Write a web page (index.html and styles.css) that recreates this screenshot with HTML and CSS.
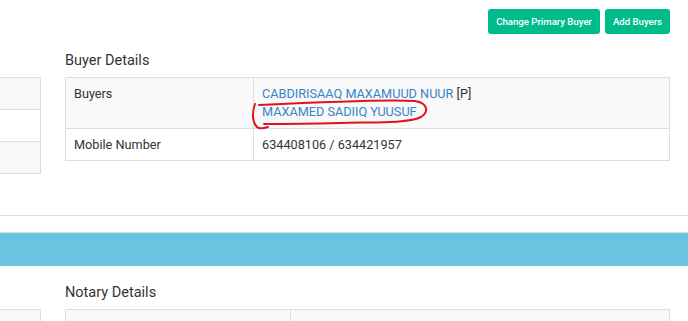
FILE: index.html
```html
<!DOCTYPE html>
<html lang="en">
<head>
  <meta charset="UTF-8" />
  <title>Property Details</title>
  <link rel="stylesheet" href="styles.css">
</head>
<body>
  <div class="page">
    <div class="toolbar">
      <button class="btn">Change Primary Buyer</button>
      <button class="btn">Add Buyers</button>
    </div>

    <section class="split">
      <div class="side">
        <table class="side-table">
          <tr><td></td></tr>
          <tr><td></td></tr>
          <tr><td></td></tr>
        </table>
      </div>
      <div class="main">
        <h4 class="block-title">Buyer Details</h4>
        <table class="detail">
          <tr>
            <th class="buyer-label">Buyers</th>
            <td>
              <div class="name"><a href="#">CABDIRISAAQ MAXAMUUD NUUR</a> [P]</div>
              <div class="name"><a href="#">MAXAMED SADIIQ YUUSUF</a></div>
            </td>
          </tr>
          <tr>
            <th class="buyer-label">Mobile Number</th>
            <td>634408106 / 634421957</td>
          </tr>
        </table>
      </div>
    </section>

    <hr class="divider">
    <div class="band"></div>

    <section class="split">
      <div class="side">
        <table class="side-table">
          <tr><td></td></tr>
          <tr><td></td></tr>
        </table>
      </div>
      <div class="main">
        <h4 class="block-title">Notary Details</h4>
        <table class="detail">
          <tr>
            <th class="notary-label">&nbsp;</th>
            <td>&nbsp;</td>
          </tr>
          <tr>
            <th class="notary-label">&nbsp;</th>
            <td>&nbsp;</td>
          </tr>
        </table>
      </div>
    </section>

    <!-- hand-drawn annotation on the screenshot -->
    <svg class="scribble" width="688" height="321" viewBox="0 0 688 321">
      <path d="M259,105 C300,103 390,99 415,101 C428,103 429,112 421,117 C410,123 380,122 340,123 C300,124 278,124 264,124 M255,104 C252,112 252,122 257,127 C259,129 265,128 268,127" />
    </svg>
  </div>
</body>
</html>
```

FILE: styles.css
```css
body {
  margin: 0;
  font-family: Roboto, "Liberation Sans", Arial, sans-serif;
  font-size: 12.7px;
  color: #333;
  background-color: #fff;
}
.page {
  position: relative;
  overflow: hidden;
  height: 321px;
}
.toolbar {
  display: flex;
  justify-content: flex-end;
  gap: 5px;
  padding: 9px 18px 0 0;
}
.btn {
  background-color: #00bc8c;
  color: white;
  border: none;
  border-radius: 3px;
  height: 25px;
  padding: 0 8px;
  font-family: inherit;
  font-size: 9.6px;
  font-weight: 500;
  cursor: pointer;
}

.split {
  display: grid;
  grid-template-columns: 41px 605px;
  column-gap: 24px;
}
.side-table {
  width: 100%;
  margin-top: 43px;
  border-collapse: collapse;
}
.side-table td {
  height: 31px;
  padding: 0;
  border: 1px solid #ddd;
  border-left: none;
}
.side-table tr:nth-child(odd) td {
  background-color: #f9f9f9;
}

.block-title {
  margin: 17px 0 6px;
  font-size: 14.5px;
  font-weight: 400;
  line-height: 20px;
}
.detail {
  width: 100%;
  border-collapse: collapse;
}
.detail th,
.detail td {
  border: 1px solid #ddd;
  padding: 7px 8px;
  line-height: 17px;
  text-align: left;
  vertical-align: top;
  font-weight: 400;
}
.detail tr:nth-child(odd) th,
.detail tr:nth-child(odd) td {
  background-color: #f9f9f9;
}
.buyer-label {
  width: 171px;
}
.notary-label {
  width: 208px;
}
.name {
  line-height: 18px;
}
.name a {
  color: #3784c8;
  text-decoration: none;
}

.divider {
  margin: 41px 0 16px;
  border: none;
  border-top: 1px solid #ddd;
}
.band {
  height: 33px;
  border-top: 1px solid #ddd;
  background-color: #68c4e0;
}

.scribble {
  position: absolute;
  left: 0;
  top: 0;
  pointer-events: none;
}
.scribble path {
  fill: none;
  stroke: #e0141e;
  stroke-width: 2;
  stroke-linecap: round;
}
```
